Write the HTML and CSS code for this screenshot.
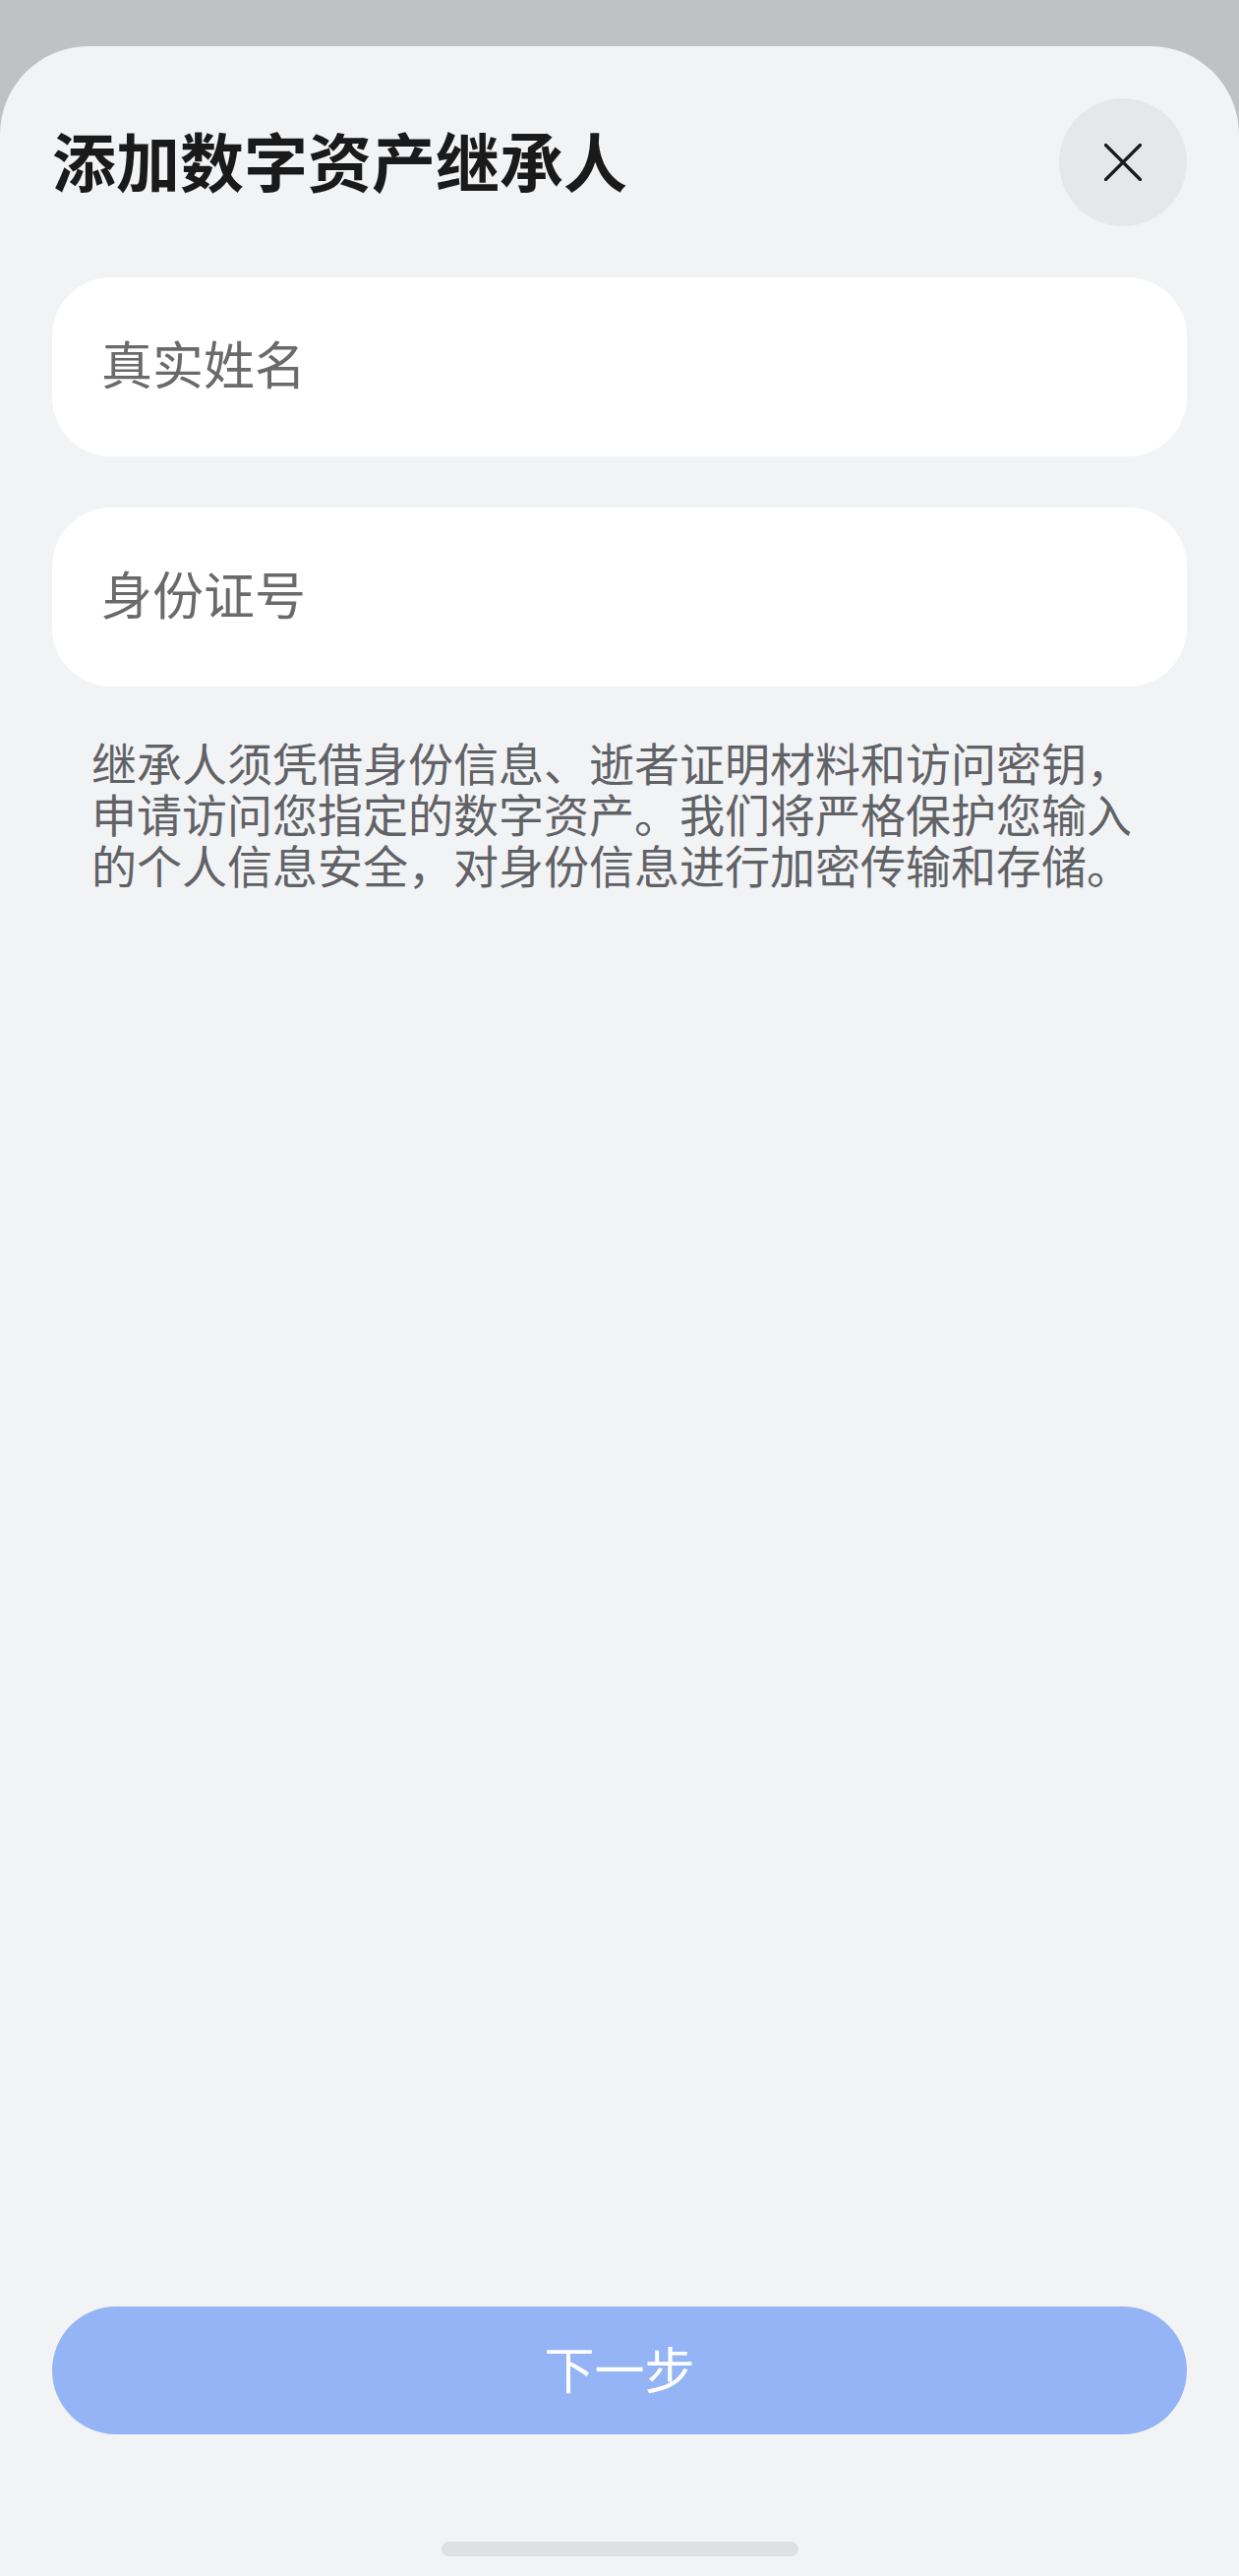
FILE: index.html
```html
<!DOCTYPE html>
<html lang="zh-CN">
<head>
  <meta charset="UTF-8">
  <meta name="viewport" content="width=device-width, initial-scale=1.0">
  <title>添加数字资产继承人</title>
  <link rel="stylesheet" href="styles.css">
</head>
<body>
  <div class="sheet">
    <div class="header">
      <h1>添加数字资产继承人</h1>
      <button class="close" type="button" aria-label="关闭">
        <svg width="38" height="38" viewBox="0 0 38 38">
          <path d="M1.5 1.5 L36.5 36.5 M36.5 1.5 L1.5 36.5" stroke="#1a1a1a" stroke-width="3.2" stroke-linecap="round" fill="none"/>
        </svg>
      </button>
    </div>

    <!-- Heir form -->
    <form class="heir-form" id="heir-form">
      <input type="text" name="name" placeholder="真实姓名">
      <input type="text" name="idcard" placeholder="身份证号">
    </form>
    <p class="notice">继承人须凭借身份信息、逝者证明材料和访问密钥，申请访问您指定的数字资产。我们将严格保护您输入的个人信息安全，对身份信息进行加密传输和存储。</p>

    <div class="footer">
      <button class="next" type="submit" form="heir-form">下一步</button>
      <div class="home-bar"></div>
    </div>
  </div>
</body>
</html>
```
FILE: styles.css
```css
body {
  margin: 0;
  background-color: #c0c1c3;
  font-family: "Noto Sans CJK SC", "Noto Sans", sans-serif;
}
.sheet {
  margin-top: 47px;
  height: calc(100vh - 47px);
  box-sizing: border-box;
  background-color: #f2f3f5;
  border-radius: 90px 90px 0 0;
  padding: 53px 53px 20px;
  display: flex;
  flex-direction: column;
}
.header {
  display: flex;
  align-items: center;
  justify-content: space-between;
  height: 130px;
}
h1 {
  margin: 0 0 6px;
  font-size: 65px;
  font-weight: 700;
  color: #1a1a1a;
  line-height: 1;
}
.close {
  width: 130px;
  height: 130px;
  border: none;
  border-radius: 50%;
  background-color: #e6e7e9;
  display: flex;
  align-items: center;
  justify-content: center;
  padding: 0;
  cursor: pointer;
}
.heir-form {
  margin: 52px 0 0;
  display: flex;
  flex-direction: column;
  gap: 52px;
}
.heir-form input {
  height: 182px;
  box-sizing: border-box;
  border: none;
  border-radius: 60px;
  background-color: #fff;
  padding: 0 50px 10px;
  font-family: inherit;
  font-size: 52px;
  color: #1a1a1a;
  outline: none;
}
.heir-form input::placeholder {
  color: #6a6a6a;
}
.notice {
  margin: 50px 0 0;
  padding: 0 40px;
  font-size: 46px;
  line-height: 52px;
  color: #616266;
}
.footer {
  margin-top: auto;
  display: flex;
  flex-direction: column;
  align-items: center;
}
.next {
  width: 100%;
  height: 130px;
  border: none;
  border-radius: 65px;
  background-color: #94b4f5;
  color: #fff;
  font-family: inherit;
  font-size: 51px;
  padding: 0 0 6px;
  cursor: pointer;
}
.home-bar {
  margin-top: 109px;
  width: 363px;
  height: 15px;
  border-radius: 8px;
  background-color: #dfe0e2;
}
```
